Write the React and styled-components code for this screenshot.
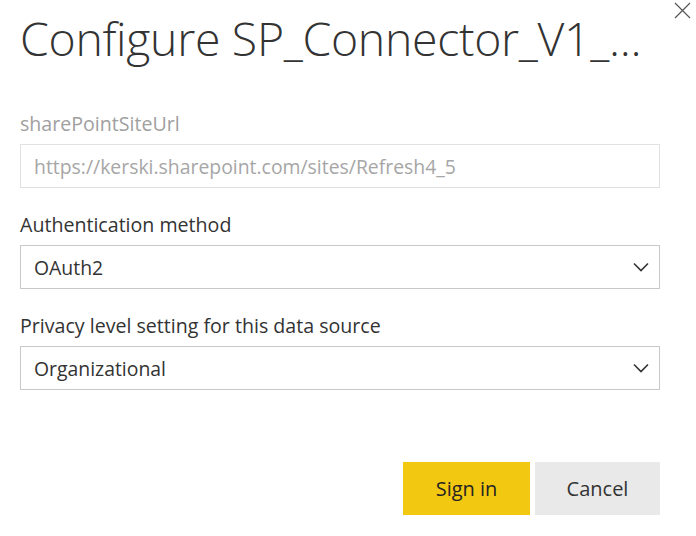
import React from 'react';
import styled, { createGlobalStyle } from 'styled-components';

const GlobalStyle = createGlobalStyle`
  html, body {
    margin: 0;
    padding: 0;
    background: #fff;
  }
  body {
    font-family: "Open Sans", "Noto Sans", sans-serif;
    color: #333;
  }
`

const Dialog = styled.div`
  position: relative;
  width: 696px;
  height: 536px;
  box-sizing: border-box;
  padding: 8px 36px 0 20px;
  display: flex;
  flex-direction: column;
  background: #fff;
`

const Close = styled.button`
  position: absolute;
  top: 1px;
  right: 4px;
  width: 20px;
  height: 20px;
  padding: 0;
  border: none;
  background: none;
  cursor: pointer;
`

const Title = styled.h1`
  margin: 0;
  font-size: 46.4px;
  line-height: 60px;
  font-weight: 300;
  color: #333;
  letter-spacing: -0.3px;
  white-space: nowrap;
`

const Field = styled.div`
  display: flex;
  flex-direction: column;
  margin-top: ${p => p.top}px;
`

const Label = styled.label`
  font-size: 19.6px;
  line-height: 24px;
  color: ${p => (p.muted ? '#a0a0a0' : '#333')};
  margin-bottom: 8px;
`

const Box = styled.div`
  height: 44px;
  box-sizing: border-box;
  border: 1px solid ${p => (p.muted ? '#e1e1e1' : '#c8c8c8')};
  display: flex;
  align-items: center;
  justify-content: space-between;
  padding: 0 10px 0 13px;
  font-size: 19.4px;
  color: ${p => (p.muted ? '#a6a6a6' : '#333')};
  background: #fff;
`

const Footer = styled.div`
  margin-top: auto;
  margin-bottom: 21px;
  display: flex;
  justify-content: flex-end;
  gap: 5px;
`

const Button = styled.button`
  width: ${p => p.w}px;
  height: 53px;
  border: none;
  font-family: inherit;
  font-size: 20px;
  color: ${p => (p.primary ? '#252423' : '#333')};
  background: ${p => (p.primary ? '#f2c811' : '#e9e9e9')};
  cursor: pointer;
`

const Chevron = () => (
  <svg width="16" height="10" viewBox="0 0 16 10">
    <path d="M1 1.5 L8 8.5 L15 1.5" fill="none" stroke="#333" strokeWidth="1.6" />
  </svg>
)

function App() {
  return (
    <>
      <GlobalStyle />
      <Dialog>
        <Close aria-label="Close">
          <svg width="20" height="20" viewBox="0 0 20 20">
            <path d="M3 2 L18 17 M18 2 L3 17" stroke="#555" strokeWidth="1.2" fill="none" />
          </svg>
        </Close>
        <Title>Configure SP_Connector_V1_...</Title>
        <Field top={44}>
          <Label muted>sharePointSiteUrl</Label>
          <Box muted>https://kerski.sharepoint.com/sites/Refresh4_5</Box>
        </Field>
        <Field top={25}>
          <Label>Authentication method</Label>
          <Box>OAuth2<Chevron /></Box>
        </Field>
        <Field top={25}>
          <Label>Privacy level setting for this data source</Label>
          <Box>Organizational<Chevron /></Box>
        </Field>
        <Footer>
          <Button primary w={127}>Sign in</Button>
          <Button w={125}>Cancel</Button>
        </Footer>
      </Dialog>
    </>
  );
}

export default App;
